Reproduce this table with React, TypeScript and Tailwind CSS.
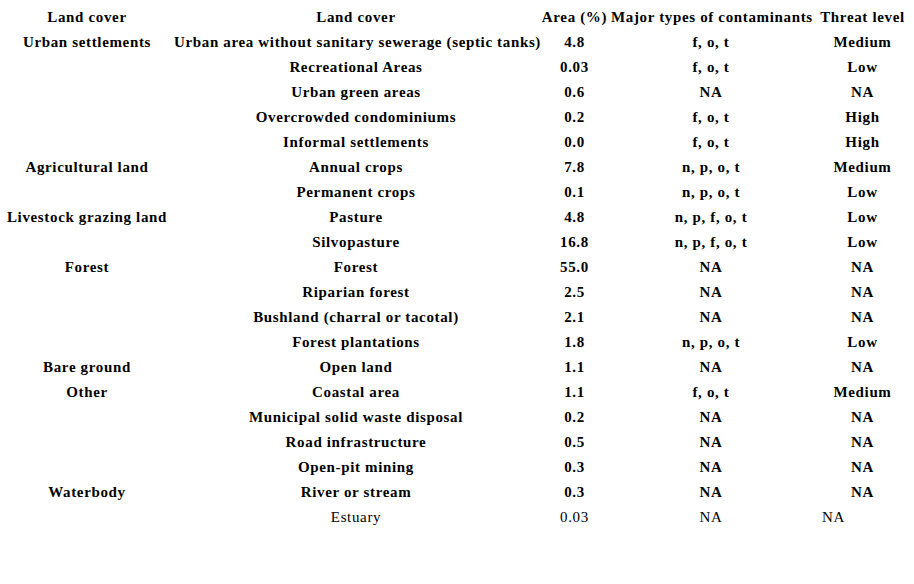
const rows: [string, string, string, string, string][] = [
  ["Urban settlements", "Urban area without sanitary sewerage (septic tanks)", "4.8", "f, o, t", "Medium"],
  ["", "Recreational Areas", "0.03", "f, o, t", "Low"],
  ["", "Urban green areas", "0.6", "NA", "NA"],
  ["", "Overcrowded condominiums", "0.2", "f, o, t", "High"],
  ["", "Informal settlements", "0.0", "f, o, t", "High"],
  ["Agricultural land", "Annual crops", "7.8", "n, p, o, t", "Medium"],
  ["", "Permanent crops", "0.1", "n, p, o, t", "Low"],
  ["Livestock grazing land", "Pasture", "4.8", "n, p, f, o, t", "Low"],
  ["", "Silvopasture", "16.8", "n, p, f, o, t", "Low"],
  ["Forest", "Forest", "55.0", "NA", "NA"],
  ["", "Riparian forest", "2.5", "NA", "NA"],
  ["", "Bushland (charral or tacotal)", "2.1", "NA", "NA"],
  ["", "Forest plantations", "1.8", "n, p, o, t", "Low"],
  ["Bare ground", "Open land", "1.1", "NA", "NA"],
  ["Other", "Coastal area", "1.1", "f, o, t", "Medium"],
  ["", "Municipal solid waste disposal", "0.2", "NA", "NA"],
  ["", "Road infrastructure", "0.5", "NA", "NA"],
  ["", "Open-pit mining", "0.3", "NA", "NA"],
  ["Waterbody", "River or stream", "0.3", "NA", "NA"],
];

export default function App() {
  return (
    <div className="w-[914px] h-[584px] bg-white pt-[5px] text-black font-['Liberation_Serif',serif] text-[15px] tracking-[0.65px]">
      <table className="w-[914px] table-fixed border-collapse">
        <colgroup>
          <col className="w-[174px]" />
          <col className="w-[364px]" />
          <col className="w-[73px]" />
          <col className="w-[200px]" />
          <col className="w-[103px]" />
        </colgroup>
        <thead>
          <tr className="h-[25px] font-bold">
            <th className="text-center whitespace-nowrap p-0">Land cover</th>
            <th className="text-center whitespace-nowrap p-0">Land cover</th>
            <th className="text-center whitespace-nowrap p-0">Area (%)</th>
            <th className="text-center whitespace-nowrap p-0">Major types of contaminants</th>
            <th className="text-center whitespace-nowrap p-0">Threat level</th>
          </tr>
        </thead>
        <tbody>
          {rows.map((r, i) => (
            <tr key={i} className="h-[25px] font-bold">
              {r.map((c, j) => (
                <td key={j} className="text-center whitespace-nowrap p-0">
                  {c}
                </td>
              ))}
            </tr>
          ))}
          <tr className="h-[25px] font-normal">
            <td className="p-0"></td>
            <td className="text-center whitespace-nowrap p-0">Estuary</td>
            <td className="text-center whitespace-nowrap p-0">0.03</td>
            <td className="text-center whitespace-nowrap p-0">NA</td>
            <td className="text-left whitespace-nowrap p-0 pl-[11px]">NA</td>
          </tr>
        </tbody>
      </table>
    </div>
  );
}
